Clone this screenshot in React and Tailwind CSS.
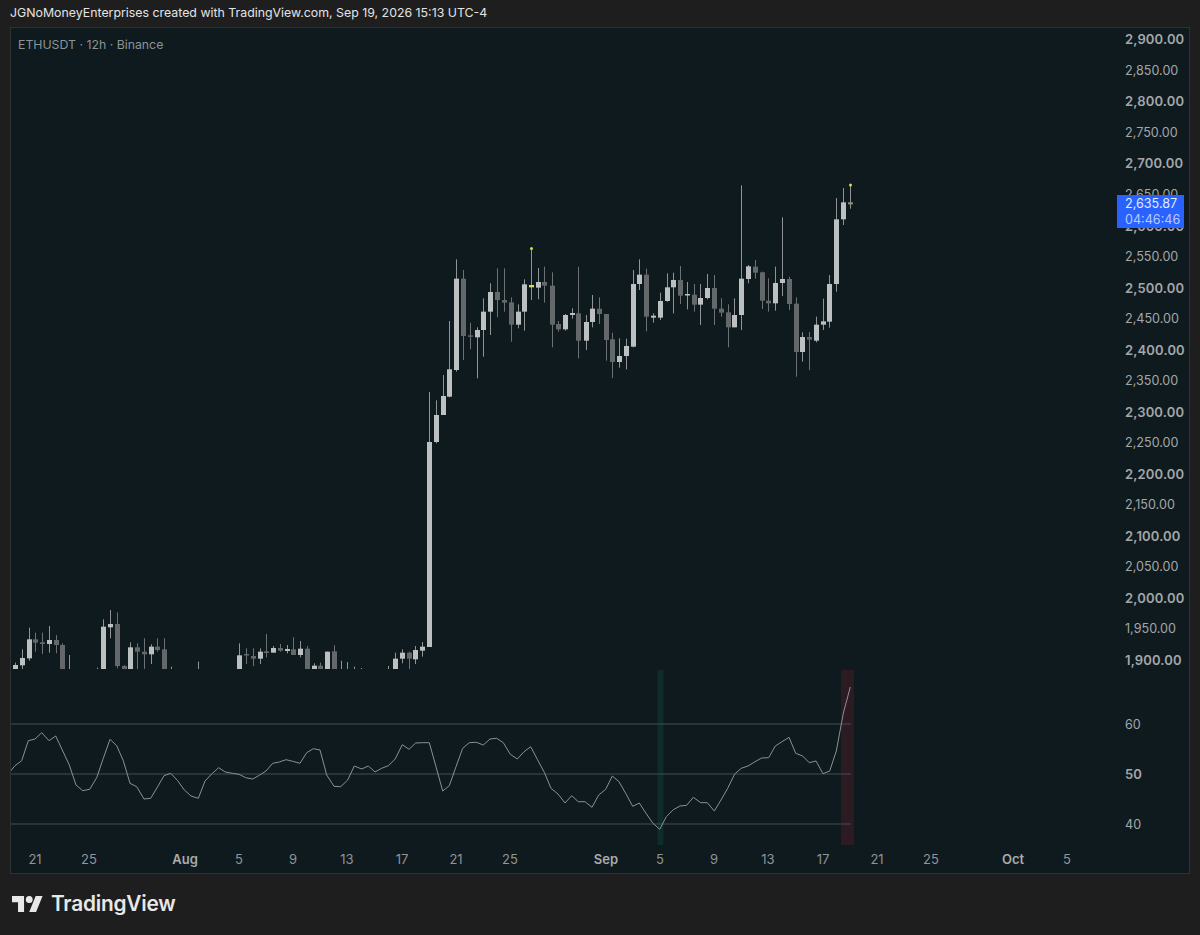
import React from 'react'

// candle data is read off 3x crops: [x, high, bodyTop, bodyBottom, low, dark]
const groups = [
  {
    ox: 0,
    oy: 590,
    rows: [
      [44, 218, 225, 237, 240, 0], [65, 178, 204, 226, 237, 0], [86, 113, 148, 205, 212, 0],
      [106, 128, 148, 158, 185, 1], [126, 128, 157, 162, 192, 1], [146, 108, 150, 162, 188, 0],
      [167, 135, 150, 165, 190, 1], [187, 160, 165, 240, 240, 1], [207, 195, 0, 0, 240, 0],
      [290, 233, 0, 0, 240, 0], [310, 88, 110, 240, 240, 0], [330, 60, 102, 112, 145, 0],
      [350, 67, 102, 228, 235, 1], [371, 225, 228, 240, 240, 1], [391, 157, 172, 240, 240, 0],
      [411, 160, 172, 185, 240, 1], [432, 145, 185, 193, 240, 1], [452, 163, 170, 193, 222, 0],
      [472, 145, 170, 180, 185, 1], [493, 145, 178, 240, 240, 1], [513, 230, 0, 0, 240, 0],
      [595, 215, 0, 0, 240, 0],
    ],
  },
  {
    ox: 230,
    oy: 620,
    rows: [
      [27, 70, 106, 150, 150, 0], [47, 85, 102, 105, 132, 1], [68, 85, 108, 116, 138, 1],
      [89, 85, 95, 116, 132, 0], [109, 42, 94, 99, 112, 1], [129, 78, 84, 98, 98, 0],
      [149, 72, 84, 92, 95, 1], [170, 75, 87, 93, 100, 0], [190, 52, 88, 105, 105, 1],
      [210, 63, 86, 105, 112, 0], [231, 78, 86, 150, 150, 1], [251, 130, 137, 150, 150, 0],
      [271, 128, 137, 150, 150, 1], [292, 95, 95, 150, 150, 0], [312, 76, 94, 150, 150, 1],
      [332, 122, 0, 0, 150, 0], [352, 126, 0, 0, 150, 0], [373, 140, 0, 0, 150, 0],
      [393, 144, 0, 0, 150, 0], [475, 138, 0, 0, 150, 0], [495, 98, 116, 150, 150, 0],
      [516, 88, 98, 116, 130, 0], [536, 95, 98, 116, 148, 1], [556, 78, 90, 118, 132, 0],
      [577, 66, 80, 92, 110, 0],
    ],
  },
  {
    ox: 410,
    oy: 240,
    rows: [
      [57, 456, 606, 1221, 1221, 0], [77, 481, 525, 606, 610, 0], [98, 405, 468, 525, 525, 0],
      [118, 243, 388, 470, 472, 0], [139, 58, 116, 390, 395, 0], [159, 90, 116, 288, 360, 1],
      [180, 248, 286, 290, 328, 1], [200, 262, 270, 292, 415, 0], [220, 175, 215, 270, 350, 0],
      [241, 130, 156, 215, 285, 0], [261, 85, 156, 180, 232, 1], [281, 85, 180, 188, 215, 1],
      [302, 172, 187, 254, 305, 1], [323, 193, 215, 254, 265, 0], [343, 118, 133, 215, 272, 0],
      [363, 25, 135, 142, 180, 2], [383, 84, 126, 143, 178, 0], [403, 80, 126, 137, 188, 1],
      [425, 97, 137, 254, 322, 1], [445, 243, 252, 268, 275, 1], [465, 222, 225, 268, 272, 0],
      [485, 205, 219, 225, 236, 0], [505, 80, 220, 302, 355, 1], [527, 225, 246, 302, 330, 0],
      [546, 165, 206, 246, 262, 0], [567, 172, 206, 222, 252, 1], [587, 222, 222, 300, 362, 1],
      [607, 278, 298, 366, 414, 1], [628, 295, 348, 366, 383, 0],
    ],
  },
  {
    ox: 620,
    oy: 170,
    rows: [
      [18, 506, 528, 558, 598, 0], [38, 300, 342, 530, 532, 0], [58, 268, 314, 342, 360, 0],
      [78, 296, 314, 440, 484, 1], [99, 430, 437, 443, 458, 0], [120, 368, 393, 443, 450, 0],
      [140, 310, 352, 393, 395, 0], [160, 308, 330, 352, 430, 0], [180, 288, 330, 377, 402, 1],
      [201, 336, 372, 376, 418, 0], [221, 342, 374, 404, 425, 1], [241, 342, 384, 404, 465, 0],
      [262, 312, 354, 384, 388, 0], [282, 315, 354, 416, 465, 1], [303, 385, 416, 428, 440, 1],
      [323, 403, 427, 472, 532, 1], [343, 385, 435, 472, 472, 0], [363, 46, 326, 435, 480, 0],
      [384, 285, 289, 327, 340, 0], [405, 270, 290, 308, 326, 1], [426, 305, 307, 392, 417, 1],
      [445, 325, 392, 400, 425, 1], [465, 290, 339, 400, 422, 0], [486, 142, 327, 339, 378, 0],
      [507, 320, 327, 402, 420, 1], [527, 382, 401, 546, 620, 1], [547, 487, 501, 546, 575, 0],
      [568, 486, 501, 509, 600, 1], [588, 440, 464, 512, 517, 0], [608, 386, 454, 464, 480, 0],
      [628, 315, 342, 455, 473, 0], [649, 84, 148, 342, 365, 0], [669, 54, 97, 148, 165, 0],
      [690, 46, 97, 103, 116, 3],
    ],
  },
]

const candles = groups.flatMap(({ ox, oy, rows }) =>
  rows.map(([x, hi, top, bot, lo, kind]) => ({
    x: Math.round(ox + x / 3) + 0.5,
    hi: oy + hi / 3,
    top: oy + top / 3,
    bot: oy + bot / 3,
    lo: oy + lo / 3,
    kind,
    wickOnly: top === 0 && bot === 0,
  }))
)

const rsiLeft = [
  [30, 215], [45, 197], [65, 182], [85, 122], [105, 117], [125, 98], [147, 122], [167, 108], [187, 150],
  [208, 195], [228, 255], [248, 272], [269, 268], [290, 233], [310, 175], [330, 118], [350, 137], [370, 182],
  [390, 250], [410, 260], [432, 297], [452, 295], [472, 262], [492, 227], [512, 220], [533, 242], [553, 270],
  [573, 288], [595, 295], [615, 243], [635, 222], [656, 203], [676, 216], [697, 220], [717, 223], [737, 233],
  [758, 237], [778, 226], [798, 213], [818, 190], [838, 186], [858, 179], [878, 184], [900, 190], [920, 158],
  [940, 146], [960, 150], [980, 225], [1002, 259], [1022, 260], [1043, 240], [1063, 198], [1085, 207],
  [1105, 198], [1125, 216], [1145, 205], [1165, 197], [1185, 178], [1207, 134], [1227, 148], [1247, 129],
  [1267, 128], [1288, 128],
]

const rsiRight = [
  [18, 305], [38, 378], [58, 362], [78, 305], [98, 250], [118, 233], [139, 232], [160, 240], [180, 222],
  [200, 220], [220, 233], [241, 268], [262, 282], [282, 260], [302, 245], [322, 283], [343, 322], [363, 370],
  [384, 387], [405, 414], [425, 392], [445, 410], [465, 410], [486, 427], [506, 390], [527, 373], [547, 333],
  [567, 350], [587, 385], [608, 424], [628, 414], [648, 445], [668, 474], [689, 493], [709, 455], [730, 434],
  [750, 423], [770, 421], [790, 397], [812, 413], [832, 413], [853, 438], [873, 405], [893, 370], [914, 327],
  [934, 310], [954, 303], [975, 290], [995, 279], [1016, 278], [1036, 243], [1056, 230], [1077, 217],
  [1097, 265], [1118, 273], [1138, 293], [1158, 288], [1179, 326], [1199, 318], [1219, 258], [1240, 145],
  [1261, 66],
]

const rsiPoints = [
  ...rsiLeft.map(([x, y]) => `${(x / 3).toFixed(1)},${(700 + y / 3).toFixed(1)}`),
  ...rsiRight.map(([x, y]) => `${(430 + x / 3).toFixed(1)},${(665 + y / 3).toFixed(1)}`),
].join(' ')

const prices = [
  '2,900.00', '2,850.00', '2,800.00', '2,750.00', '2,700.00', '2,650.00', '2,600.00', '2,550.00', '2,500.00',
  '2,450.00', '2,400.00', '2,350.00', '2,300.00', '2,250.00', '2,200.00', '2,150.00', '2,100.00', '2,050.00',
  '2,000.00', '1,950.00', '1,900.00',
]

const ticks = [
  ['21', 35], ['25', 89], ['Aug', 185, true], ['5', 239], ['9', 293], ['13', 347], ['17', 402], ['21', 456],
  ['25', 510], ['Sep', 606, true], ['5', 660], ['9', 714], ['13', 768], ['17', 823], ['21', 877], ['25', 931],
  ['Oct', 1013, true], ['5', 1067],
]

function Candle({ c }) {
  const wick = c.kind === 1 ? '#6e7174' : '#909496'
  const body = c.kind === 1 ? '#65686a' : c.kind === 2 ? '#d8dc50' : c.kind === 3 ? '#8f917c' : '#bdc0c1'
  return (
    <g>
      <line x1={c.x} x2={c.x} y1={c.hi} y2={c.lo} stroke={wick} strokeWidth="1" />
      {!c.wickOnly && <rect x={c.x - 2.5} y={c.top} width="5" height={Math.max(c.bot - c.top, 1.5)} fill={body} />}
    </g>
  )
}

function PriceChart() {
  return (
    <svg className="block w-full h-full" viewBox="11 28 1089 641" preserveAspectRatio="none">
      {candles.map((c, i) => (
        <Candle key={i} c={c} />
      ))}
      <circle cx="531.5" cy="248.5" r="1.5" fill="#d9dd4a" />
      <circle cx="850.5" cy="185" r="1.5" fill="#d9dd4a" />
    </svg>
  )
}

function RsiChart() {
  return (
    <svg className="block w-full h-full" viewBox="11 669 1089 176" preserveAspectRatio="none">
      <rect x="657.5" y="670" width="6" height="175" fill="#0f2b2a" />
      <rect x="841" y="670" width="13" height="175" fill="#2c1b21" />
      {[724, 774, 824].map((y) => (
        <line key={y} x1="11" x2="851" y1={y} y2={y} stroke="#454f53" strokeWidth="1" />
      ))}
      <polyline points={rsiPoints} fill="none" stroke="#8c9092" strokeWidth="1" strokeLinejoin="round" />
    </svg>
  )
}

function Logo() {
  return (
    <svg className="w-[31px] h-[16px]" viewBox="0 0 36 18" fill="#e8e8e8" preserveAspectRatio="none">
      <path d="M14 18H7V7H0V0h14v18zM28 18h-8L27.5 0h8L28 18z" />
      <circle cx="20" cy="4" r="4" />
    </svg>
  )
}

export default function App() {
  return (
    <div className="w-[1200px] h-[935px] bg-[#1e1e1e] flex flex-col overflow-hidden font-['Inter',sans-serif]">
      <div className="h-[27px] pl-[10px] flex items-center text-[12.35px] text-[#e4e4e4]">
        JGNoMoneyEnterprises created with TradingView.com, Sep 19, 2026 15:13 UTC-4
      </div>

      <div className="relative ml-[10px] w-[1180px] h-[847px] border border-[#2c3133] bg-[#0f1a1f] flex flex-col">
        <div className="absolute left-[7px] top-[8px] text-[12.3px] text-[#8b9396]">ETHUSDT · 12h · Binance</div>

        <div className="flex h-[641px]">
          <div className="w-[1089px] h-full">
            <PriceChart />
          </div>
          <div className="relative flex-1">
            <div className="-mt-[3.5px] pl-[25px] flex flex-col text-[#a3a7a9]">
              {prices.map((p, i) => (
                <div
                  key={p}
                  className={`h-[31.05px] shrink-0 flex items-center ${i % 2 === 0 ? 'text-[13px] font-semibold tracking-[0.15px]' : 'text-[12.6px]'}`}
                >
                  {p}
                </div>
              ))}
            </div>
            <div className="absolute right-[5px] top-[167px] w-[67px] h-[33px] pl-[8px] bg-[#2962ff] flex flex-col justify-center text-[12.6px] leading-[16px] text-[#e6ecff]">
              <div>2,635.87</div>
              <div className="text-[#b9ccff]">04:46:46</div>
            </div>
          </div>
        </div>

        <div className="flex h-[176px]">
          <div className="w-[1089px] h-full">
            <RsiChart />
          </div>
          <div className="flex-1 pt-[31px] pl-[25px] flex flex-col text-[12.6px] text-[#a3a7a9]">
            <div className="h-[50px] shrink-0 flex items-center">60</div>
            <div className="h-[50px] shrink-0 flex items-center text-[13px] font-semibold">50</div>
            <div className="h-[50px] shrink-0 flex items-center">40</div>
          </div>
        </div>

        <div className="flex-1 flex items-center pl-[24px] pt-[1px] text-[13px] text-[#8f9496]">
          {ticks.map(([label, x, bold], i) => (
            <div key={i} style={{ width: i < ticks.length - 1 ? ticks[i + 1][1] - x : 20 }} className="shrink-0">
              <span className={`inline-block -translate-x-1/2 ${bold ? 'font-semibold text-[#a8acae]' : ''}`}>{label}</span>
            </div>
          ))}
        </div>
      </div>

      <div className="flex-1 flex items-center gap-[8px] pl-[12px] pb-[1px]">
        <Logo />
        <span className="text-[20.8px] font-semibold tracking-[-0.2px] text-[#e8e8e8]">TradingView</span>
      </div>
    </div>
  )
}
